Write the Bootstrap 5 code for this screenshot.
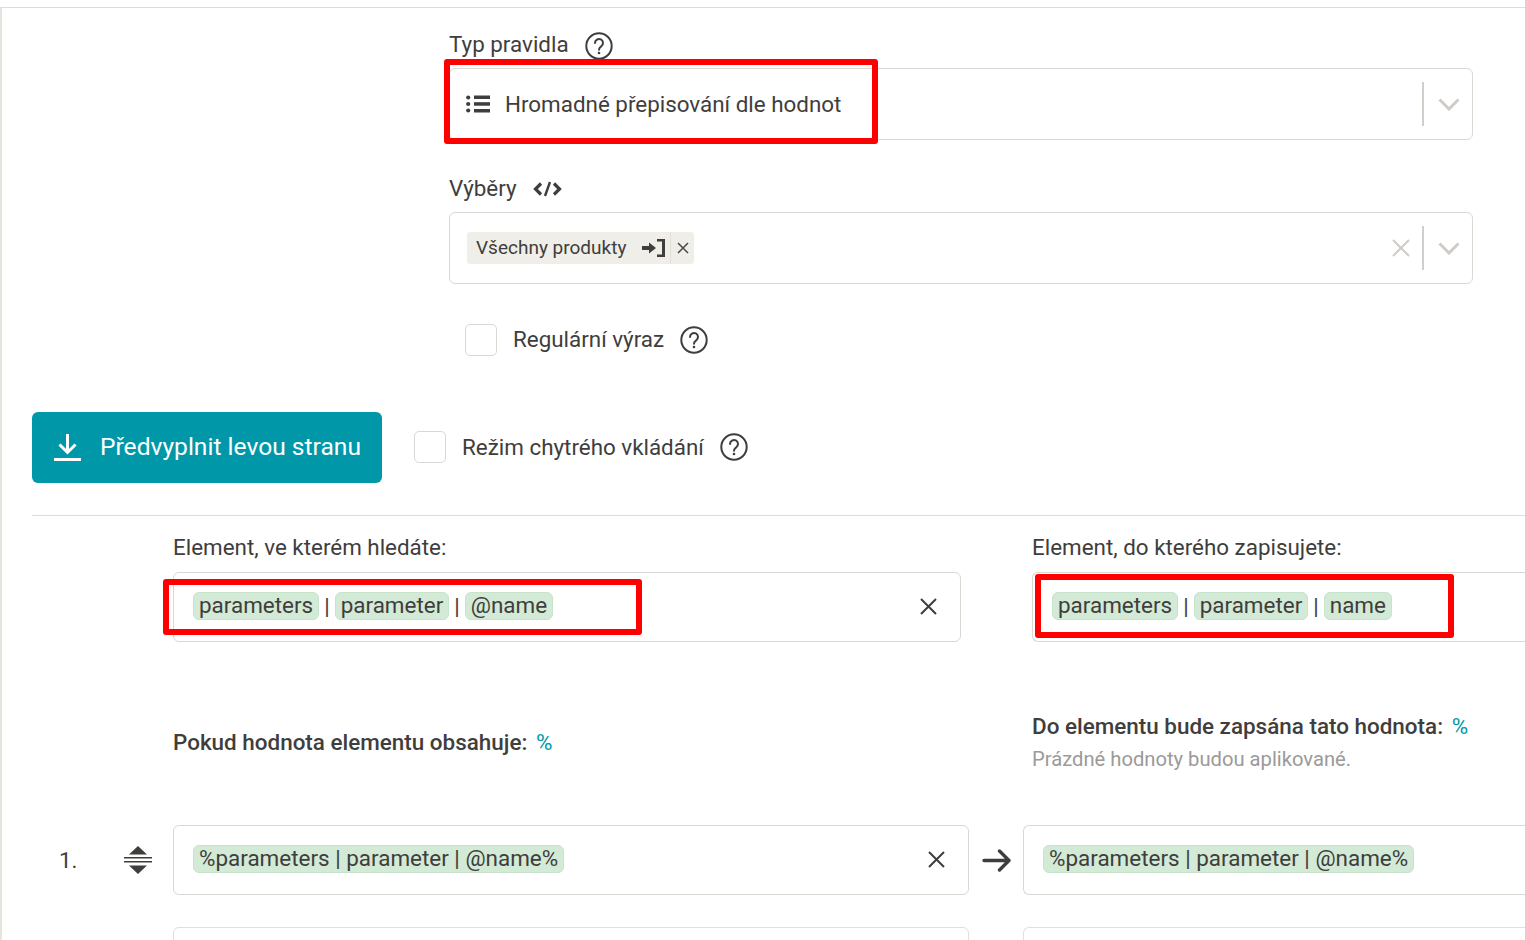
<!DOCTYPE html>
<html lang="cs">
<head>
<meta charset="utf-8">
<title>Pravidlo</title>
<link href="https://cdn.jsdelivr.net/npm/bootstrap@5.3.0/dist/css/bootstrap.min.css" rel="stylesheet">
<style>
html,body{height:940px;overflow:hidden;background:#fff}
body{font-family:Roboto,"Liberation Sans",sans-serif;color:#3f3e3c;font-size:22.4px;line-height:1.2}
.shell{height:940px;width:1525px;padding-top:7px;overflow:hidden}
.frame{border-left:2px solid #e6e2dc;border-top:1px solid #dfdcd8;height:933px;padding-left:30px;overflow:hidden}
.top-form{margin-left:417px;width:1024px}
.lbl{height:60px;display:flex;align-items:flex-end;padding-bottom:10px;gap:16px}
.lbl-b{height:72px}
.q-ico{margin-bottom:-2px;flex:none}
.code-ico{margin-bottom:5px;flex:none}
.sel{height:72px;border:1px solid #dbd7d2;border-radius:6px;display:flex;align-items:center;padding-left:16px;position:relative;background:#fff}
.sel-text{margin-left:15px}
.sel-end{margin-left:auto;display:flex;align-items:center;height:44px}
.vbar{width:2px;height:44px;background:#d2cec9;margin-left:12px}
.chev{margin:0 12px 0 14px}
.tagx{background:#f0eee9;border-radius:3px;height:32px;display:flex;align-items:center;font-size:19px;padding-left:9px;margin-left:1px}
.tagx svg{flex:none}
.tagx-sep{width:1px;height:32px;background:#e2dfd9;margin-left:4px}
.tagx-close{width:23px;display:flex;justify-content:center}
.chk-row{display:flex;align-items:center;gap:16px}
.box{width:32px;height:32px;border:1px solid #dbd7d2;border-radius:5px;background:#fff;flex:none}
.rx-row{margin:40px 0 0 16px;height:32px}
.rx-text{padding-bottom:1px}
.tool-row{margin-top:56px;height:71px;display:flex;align-items:center;gap:32px}
.tool-chk{margin-top:-1px}
.fill-btn{background:#0098a8;border:0;border-radius:6px;color:#fff;width:350px;height:71px;font-size:24.6px;display:flex;align-items:center;gap:18px;padding:0 0 0 21px}
.fill-btn:hover{background:#0098a8;color:#fff}
.sep-line{border-top:1px solid #dfdcd8;margin-top:32px;height:0}
.cols{display:flex;margin-left:141px}
.col-left{width:788px;flex:none}
.col-right{margin-left:71px;width:600px;flex:none}
.fld-lbl{height:56px;display:flex;align-items:flex-end;padding-bottom:11px}
.inp{height:70px;border:1px solid #dbd7d2;border-radius:6px;display:flex;align-items:center;padding:0 23px 2px 19px;background:#fff;position:relative}
.open-end{border-right:0;border-radius:6px 0 0 6px}
.path{display:flex;align-items:center;gap:5px;font-size:22.45px}
.pill{background:#d3ead6;border:1px solid #c7e3cc;border-radius:6px;padding:0 5px;height:28px;line-height:25px;display:inline-block;white-space:nowrap}
.close-x{margin-left:auto;flex:none}
.mark-red{position:absolute;border:6px solid #f00;border-radius:3px;pointer-events:none}
.hd-row{display:flex;margin-left:141px;height:183px}
.hd-left{width:859px;flex:none;padding-top:87px;font-weight:500;font-size:22.45px}
.hd-right{padding-top:71px;font-weight:500;font-size:22.45px}
.pct{color:#0098a8;font-weight:400;margin-left:3px}
.hint{font-weight:400;font-size:20.2px;color:#9b9a98;margin-top:7px}
.val-row{display:flex;align-items:center;margin:0 0 0 27px;height:70px}
.num{width:65px;flex:none}
.grip{width:49px;flex:none;display:flex}
.vinp{width:796px;flex:none;height:70px;border:1px solid #dbd7d2;border-radius:6px;display:flex;align-items:center;padding:0 23px 2px 19px;background:#fff}
.arrow{width:54px;flex:none;display:flex;justify-content:center}
.vinp-r{flex:none;width:600px;height:70px;border:1px solid #dbd7d2;border-right:0;border-radius:6px 0 0 6px;display:flex;align-items:center;padding:0 0 2px 19px}
.stub-row{display:flex;margin:32px 0 0 141px}
.stub-l{width:796px;height:40px;border:1px solid #e2dfda;border-radius:6px;flex:none}
.stub-r{margin-left:54px;width:600px;height:40px;border:1px solid #e2dfda;border-right:0;border-radius:6px 0 0 6px;flex:none}
</style>
</head>
<body>
<div class="shell">
<div class="frame">
  <div class="top-form">
    <div class="lbl"><span>Typ pravidla</span>
      <svg class="q-ico" width="28" height="28" viewBox="0 0 28 28" fill="none" stroke="#3f3e3c" stroke-width="2"><circle cx="14" cy="14" r="12.7"/><path d="M10 11a4 4 0 1 1 6.2 3.3c-1.500 1-2.200 1.700-2.200 3.400" stroke-linecap="round"/><circle cx="14" cy="21" r="1.300" fill="#3f3e3c" stroke="none"/></svg>
    </div>
    <div class="sel">
      <svg width="24" height="18" viewBox="0 0 24 18" fill="#3f3e3c" class="flex-shrink-0"><circle cx="2.200" cy="2.500" r="2.100"/><circle cx="2.200" cy="9" r="2.100"/><circle cx="2.200" cy="15.500" r="2.100"/><rect x="8" y="0.500" width="16" height="3.500"/><rect x="8" y="7.200" width="16" height="3.500"/><rect x="8" y="14" width="16" height="3.500"/></svg>
      <span class="sel-text">Hromadné přepisování dle hodnot</span>
      <span class="sel-end"><span class="vbar"></span>
        <svg class="chev" width="22" height="13" viewBox="0 0 22 13" fill="none" stroke="#cfcbc6" stroke-width="3"><path d="M1.500 1.500 11 11l9.500-9.500"/></svg>
      </span>
    </div>
    <div class="lbl lbl-b"><span>Výběry</span>
      <svg class="code-ico" width="29" height="16" viewBox="0 0 29 16" fill="none" stroke="#3f3e3c" stroke-width="3.200"><path d="M8 2.500 2.500 8 8 13.500M21 2.500 26.500 8 21 13.500"/><path d="M17 1 12 15" stroke-width="2.400"/></svg>
    </div>
    <div class="sel">
      <span class="tagx"><span>Všechny produkty</span>
        <svg class="ms-3" width="24" height="20" viewBox="0 0 24 20" fill="#3f3e3c"><path d="M0 8h7V4.500l7 5.500-7 5.500V12H0z"/><path d="M15 1h8v18h-8v-2.600h5V3.600h-5z"/></svg>
        <span class="tagx-sep"></span>
        <span class="tagx-close"><svg width="12" height="12" viewBox="0 0 12 12" stroke="#4a4947" stroke-width="1.500"><path d="M1 1l10 10M11 1 1 11"/></svg></span>
      </span>
      <span class="sel-end">
        <svg width="18" height="18" viewBox="0 0 18 18" stroke="#cfcbc6" stroke-width="2"><path d="M1 1l16 16M17 1 1 17"/></svg>
        <span class="vbar"></span>
        <svg class="chev" width="22" height="13" viewBox="0 0 22 13" fill="none" stroke="#cfcbc6" stroke-width="3"><path d="M1.500 1.500 11 11l9.500-9.500"/></svg>
      </span>
    </div>
    <div class="chk-row rx-row">
      <span class="box"></span><span class="rx-text">Regulární výraz</span>
      <svg width="28" height="28" viewBox="0 0 28 28" fill="none" stroke="#3f3e3c" stroke-width="2"><circle cx="14" cy="14" r="12.7"/><path d="M10 11a4 4 0 1 1 6.2 3.3c-1.500 1-2.200 1.700-2.200 3.400" stroke-linecap="round"/><circle cx="14" cy="21" r="1.300" fill="#3f3e3c" stroke="none"/></svg>
    </div>
  </div>

  <div class="tool-row">
    <button type="button" class="btn fill-btn">
      <svg width="29" height="27" viewBox="0 0 29 27" fill="none" stroke="#fff" stroke-width="3"><path d="M14.500 0v18M6.500 10.500l8 8 8-8"/><path d="M1 25.500h27"/></svg>
      <span>Předvyplnit levou stranu</span>
    </button>
    <div class="chk-row tool-chk"><span class="box"></span><span>Režim chytrého vkládání</span>
      <svg width="28" height="28" viewBox="0 0 28 28" fill="none" stroke="#3f3e3c" stroke-width="2"><circle cx="14" cy="14" r="12.7"/><path d="M10 11a4 4 0 1 1 6.2 3.3c-1.500 1-2.200 1.700-2.200 3.400" stroke-linecap="round"/><circle cx="14" cy="21" r="1.300" fill="#3f3e3c" stroke="none"/></svg>
    </div>
  </div>
  <div class="sep-line"></div>

  <div class="cols">
    <div class="col-left">
      <div class="fld-lbl">Element, ve kterém hledáte:</div>
      <div class="inp">
        <span class="path"><span class="pill">parameters</span><span>|</span><span class="pill">parameter</span><span>|</span><span class="pill">@name</span></span>
        <svg class="close-x" width="17" height="17" viewBox="0 0 17 17" stroke="#3f3e3c" stroke-width="2"><path d="M1 1l15 15M16 1 1 16"/></svg>
      </div>
    </div>
    <div class="col-right">
      <div class="fld-lbl">Element, do kterého zapisujete:</div>
      <div class="inp open-end">
        <span class="path"><span class="pill">parameters</span><span>|</span><span class="pill">parameter</span><span>|</span><span class="pill">name</span></span>
      </div>
    </div>
  </div>

  <div class="hd-row">
    <div class="hd-left">Pokud hodnota elementu obsahuje: <span class="pct">%</span></div>
    <div class="hd-right">Do elementu bude zapsána tato hodnota: <span class="pct">%</span>
      <div class="hint">Prázdné hodnoty budou aplikované.</div>
    </div>
  </div>

  <div class="val-row">
    <span class="num">1.</span>
    <span class="grip"><svg width="28" height="28" viewBox="0 0 28 28" fill="#3f3e3c"><path d="M14 0l9 8.500H5zM14 28l9-8.500H5z"/><rect y="11" width="28" height="1.500"/><rect y="15" width="28" height="1.500"/></svg></span>
    <div class="vinp">
      <span class="path"><span class="pill">%parameters | parameter | @name%</span></span>
      <svg class="close-x" width="17" height="17" viewBox="0 0 17 17" stroke="#3f3e3c" stroke-width="2"><path d="M1 1l15 15M16 1 1 16"/></svg>
    </div>
    <span class="arrow"><svg width="29" height="23" viewBox="0 0 29 23" fill="none" stroke="#3f3e3c" stroke-width="3.400" stroke-linecap="round" stroke-linejoin="round"><path d="M2 11.500h25M17.500 2l9.500 9.500-9.500 9.500"/></svg></span>
    <div class="vinp-r">
      <span class="path"><span class="pill">%parameters | parameter | @name%</span></span>
    </div>
  </div>
  <div class="stub-row"><div class="stub-l"></div><div class="stub-r"></div></div>
</div>
</div>
<div class="mark-red" style="left:444px;top:59px;width:434px;height:85px"></div>
<div class="mark-red" style="left:163px;top:579px;width:479px;height:56px"></div>
<div class="mark-red" style="left:1035px;top:574px;width:419px;height:64px"></div>
<script src="https://cdn.jsdelivr.net/npm/bootstrap@5.3.0/dist/js/bootstrap.bundle.min.js"></script>
</body>
</html>
